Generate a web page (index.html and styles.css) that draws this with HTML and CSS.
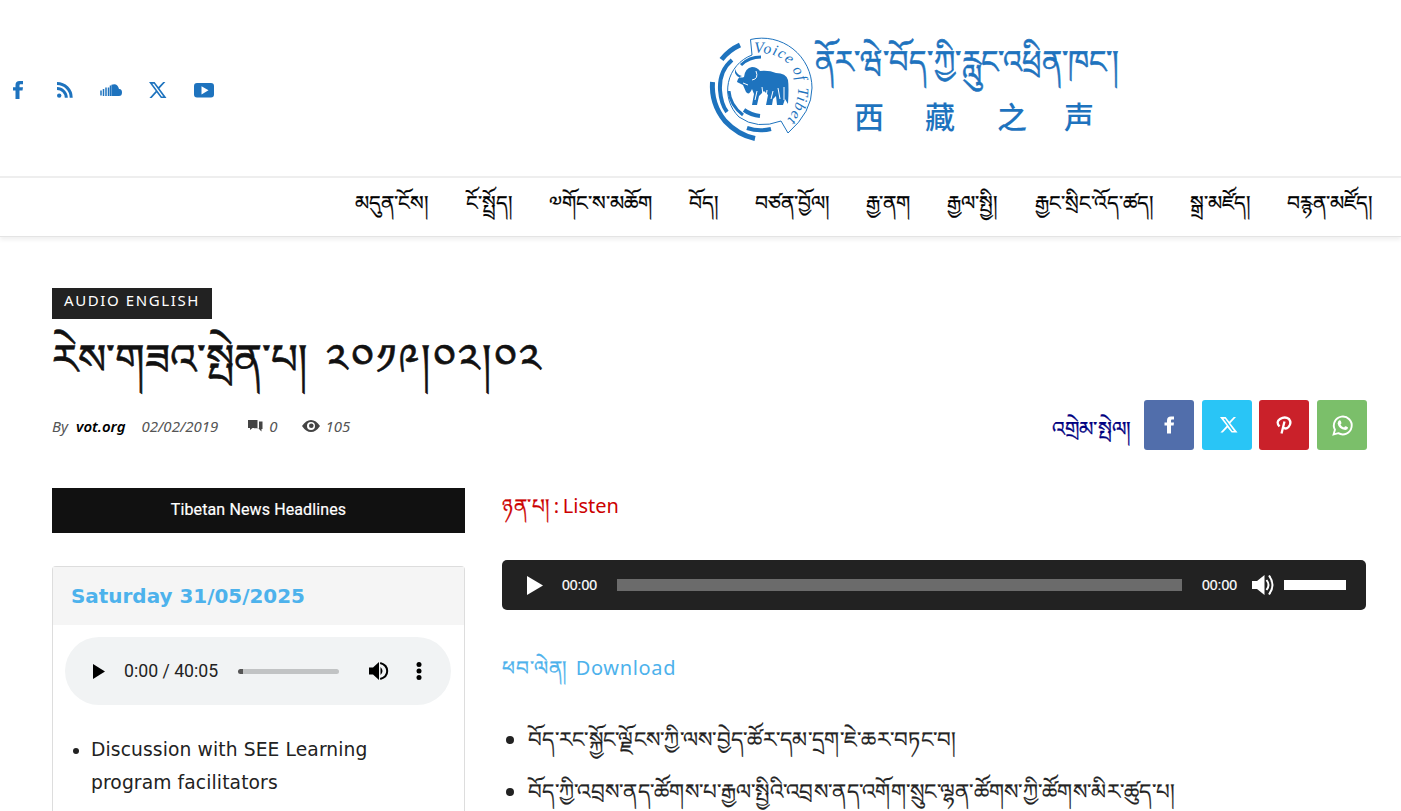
FILE: index.html
```html
<!DOCTYPE html>
<html lang="bo">
<head>
<meta charset="utf-8">
<title>རེས་གཟའ་སྤེན་པ། ༢༠༡༩།༠༢།༠༢</title>
<link rel="stylesheet" href="styles.css">
</head>
<body>
<header class="top">
  <div class="social">
    <svg viewBox="0 0 20 20"><path d="M7.500 19v-8.500H5V7.300h2.500V5C7.500 2.300 9 1 11.500 1H15v3.200h-2.200c-1 0-1.300.5-1.300 1.400v1.700H15l-.5 3.200h-3V19z"/></svg>
    <svg viewBox="0 0 20 20"><circle cx="4.200" cy="15.600" r="2.200"/><path d="M2 8.500a9.300 9.300 0 0 1 9.300 9.300M2 3.500a14.200 14.200 0 0 1 14.200 14.200" fill="none" stroke="#1e73be" stroke-width="3"/></svg>
    <svg class="wide" viewBox="0 0 24 20"><path d="M2 10.500v5M4.500 9v7M7 7.500v8.500M9.500 7.500V16M11.500 5.500V16" fill="none" stroke="#1e73be" stroke-width="1.500"/><path d="M12.400 4.800Q18.500 2.500 20 9q3-.3 3 3.500t-3.500 3.500h-7.100z"/></svg>
    <svg viewBox="0 0 20 20"><path fill-rule="evenodd" d="M1 2h5.600l3.800 5L15.200 2h2.200l-5.900 6.600L18.500 18h-5.600L8.700 12.500 3.700 18H1.400l6.300-7.100zM4.300 3.700 13.700 16.400h1.600L6 3.700z"/></svg>
    <svg viewBox="0 0 20 20"><path fill-rule="evenodd" d="M3 3h14q3 0 3 3v8.500q0 3-3 3H3q-3 0-3-3V6q0-3 3-3zm4.500 3.200v8.200l7-4.100z"/></svg>
  </div>
  <svg class="logo" viewBox="700 25 430 125">
    <g fill="none" stroke="#1e73be">
      <path stroke-width="1" d="M752 55L750.500 39.500A50 50 0 0 1 812 88Q812 112 788 133L781 121Q757 130 739 117A37.500 37.500 0 0 1 752 55"/>
      <path stroke-width="5" d="M721.500 59.500Q729 50 740 45"/>
      <path stroke-width="5" d="M712.500 82Q711 104 725 121 738 135 755 138.500"/>
      <path stroke-width="4" d="M732 60Q719 71 720 90q1 14 7 22M747 128q12 4 24 1M744 110q7 5 16 6"/>
      <path stroke-width="3" d="M729 91q1 14 14 24M741 65q8-8 20-8"/>
    </g>
    <path d="M735 73q3 6 9 4 1-9 8-10 5 0 8 4 9-1 16 2 10 0 12 7 1 7 0 24l-3-5-2 6h-6l-1-9-3 3-1 6h-6l2-10-4-4-5 5-2 9h-5l2-11-2-5q-3 7-6 3l-3-7-6-3q1-5 5-6-5-1-7-7z" fill="#1e73be"/>
    <path d="M756 71q3 8-4 9M743 83l5 2M757 91l-2 9M762 87l1 8M767 90l-1 8M773 91l-2 8M778 88l2 11M784 87v13" fill="none" stroke="#fff"/>
    <path id="arc" d="M754 53Q788 51 797 80 802 103 783 125" fill="none"/>
    <text class="voice"><textPath href="#arc" textLength="98">Voice of Tibet</textPath></text>
    <text class="logo-bo" x="815" y="73" textLength="304" lengthAdjust="spacingAndGlyphs">ནོར་ཝེ་བོད་ཀྱི་རླུང་འཕྲིན་ཁང་།</text>
    <text class="logo-zh" x="854 925 997 1064" y="128">西藏之声</text>
  </svg>
</header>
<nav class="menu">
  <a>མདུན་ངོས།</a><a>ངོ་སྤྲོད།</a><a>༧གོང་ས་མཆོག</a><a>བོད།</a><a>བཙན་བྱོལ།</a><a>རྒྱ་ནག</a><a>རྒྱལ་སྤྱི།</a><a>རྒྱང་སྲིང་འོད་ཚད།</a><a>སྒྲ་མཛོད།</a><a>བརྙན་མཛོད།</a>
</nav>
<main>
  <span class="tag">AUDIO ENGLISH</span>
  <h1>རེས་གཟའ་སྤེན་པ། <span class="day">༢༠༡༩།༠༢།༠༢</span></h1>
  <div class="info">
    <div class="meta">
      <span>By</span><b>vot.org</b><span class="date">02/02/2019</span>
      <svg class="bubble" viewBox="0 0 16 14"><path d="M1 1h9.500v8H5.500L3 11V9H1zM12 2.500h3.500V10h-1v2.500L12 10H7V9.800h5z"/></svg><span class="n">0</span>
      <svg class="eye" viewBox="0 0 18 12"><path fill-rule="evenodd" d="M0 6q4-6 9-6t9 6q-4 6-9 6T0 6zm9-4a4 4 0 1 0 0 8 4 4 0 0 0 0-8z"/><circle cx="9.300" cy="5.700" r="2.300"/></svg><span class="n">105</span>
    </div>
    <div class="share">
      <span class="share-label">འགྲེམ་སྤེལ།</span>
      <i class="fb"><svg viewBox="0 0 20 20"><path d="M8 18.500v-8H5.500V7.500H8V5.500C8 2.700 9.300 1.500 12 1.500h3v3h-1.700c-.9 0-1.300.5-1.300 1.300v1.700h3l-.4 3H12v8z"/></svg></i>
      <i class="tw"><svg viewBox="0 0 20 20"><path fill-rule="evenodd" d="M1 1.500h6l3.800 5L15.500 1.500h2.400l-6 6.700L19.500 18h-6.200l-4.300-5.500L4 18H1.500l6.600-7.300zM4.700 3.300 14 16.300h1.800L6.400 3.300z"/></svg></i>
      <i class="pin"><svg viewBox="0 0 20 20"><path d="M5.500 11.500Q1.500 7 6 4q5-3 9 0 3 4-.5 8-3 3-5.500 0M10.500 6.500 7.500 18.500" fill="none" stroke="#fff" stroke-width="2.300"/></svg></i>
      <i class="wa"><svg viewBox="0 0 20 20"><path d="m1.500 18.500 1.300-4.500A8.500 8.500 0 1 1 6 17.300z" fill="none" stroke="#fff" stroke-width="1.800"/><path d="M6 6q1.500-2 2.500 0l.5 1.500q-.2 1-1 1.500 1.200 2.200 3.500 3 1-1.700 1.800-1.200l2 1q0 2.200-2.600 2.600Q6.500 13.500 5.300 8.200z"/></svg></i>
    </div>
  </div>
  <div class="columns">
    <aside>
      <div class="headline">Tibetan News Headlines</div>
      <section class="card">
        <h2>Saturday 31/05/2025</h2>
        <div class="player">
          <svg class="pl" viewBox="0 0 12 15"><path d="M0 0v15l12-7.500z"/></svg>
          <span>0:00 / 40:05</span><div class="track"></div>
          <svg class="vol" viewBox="0 0 20 20"><path d="M0 6.500h4L10 1v18l-6-5.500H0zM11.500 6q4 4 0 8z"/><path d="M12 2q7 2 7 8t-7 8" transform="translate(-.8)" fill="none" stroke="#000" stroke-width="2"/></svg>
          <svg class="dots" viewBox="0 0 6 18"><circle cx="3" cy="2.500" r="2.500"/><circle cx="3" cy="9" r="2.500"/><circle cx="3" cy="15.500" r="2.500"/></svg>
        </div>
        <ul><li><span>Discussion with SEE Learning</span><br><span>program facilitators</span></li></ul>
      </section>
    </aside>
    <article>
      <p class="listen"><span class="bo">ཉན་པ།</span> : Listen</p>
      <div class="audio">
        <svg class="pl" viewBox="0 0 16 19"><path d="M0 0v19l16-9.500z"/></svg>
        <span>00:00</span><div class="rail"></div><span>00:00</span>
        <svg class="vol" viewBox="0 0 22 22"><path d="M0 7h5l7.500-6v20L5 15H0z"/><path d="M14.500 6q4 5 0 10M17 1.500q7 9.500 0 19" fill="none" stroke="#fff" stroke-width="2"/></svg>
        <div class="level"></div>
      </div>
      <p class="download"><span class="bo">ཕབ་ལེན།</span> <span>Download</span></p>
      <ul class="news">
        <li>བོད་རང་སྐྱོང་ལྗོངས་ཀྱི་ལས་བྱེད་ཚོར་དམ་དྲག་ཇེ་ཆར་བཏང་བ།</li>
        <li>བོད་ཀྱི་འབྲས་ནད་ཚོགས་པ་རྒྱལ་སྤྱིའི་འབྲས་ནད་འགོག་སྲུང་ལྷན་ཚོགས་ཀྱི་ཚོགས་མིར་ཚུད་པ།</li>
      </ul>
    </article>
  </div>
</main>
</body>
</html>
```
FILE: styles.css
```css
* { box-sizing: border-box; }
body { margin: 0; height: 811px; overflow: hidden; background: #fff; color: #222; font-family: "Noto Sans", sans-serif; }
svg { display: block; flex: none; overflow: visible; }
.top { height: 178px; border-bottom: 2px solid #eee; display: flex; padding: 25px 271px 0 8px; justify-content: space-between; }
.social { display: flex; gap: 26.500px; padding-top: 55px; height: 75px; fill: #1e73be; }
.social svg { width: 20px; height: 20px; }
.social .wide { width: 24px; margin: 0 -2px; }
.logo { width: 430px; height: 125px; fill: #1e73be; }
.voice { font: italic 15.500px "Liberation Serif", serif; }
.logo-bo { font-size: 32px; stroke: #1e73be; stroke-width: .6px; }
.logo-zh { font: 500 30px "Noto Sans CJK SC", sans-serif; }
.menu { height: 59px; border-bottom: 1px solid #e4e4e4; box-shadow: 0 3px 4px rgba(0,0,0,.06); display: flex; justify-content: flex-end; gap: 37.200px; padding: 8px 29px 0 0; color: #000; font-size: 20.230px; line-height: 32px; white-space: nowrap; -webkit-text-stroke: .25px #000; }
main { padding: 51px 34px 0 52px; }
.tag { display: block; width: 160px; height: 31px; background: #222; color: #fff; font-size: 15px; line-height: 25px; letter-spacing: 1.600px; padding-left: 12px; white-space: nowrap; }
h1 { margin: 7px 0 0; height: 74px; line-height: 63px; font-size: 42px; font-weight: 400; letter-spacing: .1px; color: #111; white-space: nowrap; -webkit-text-stroke: .6px #111; }
.day { letter-spacing: 2.300px; margin-left: 8px; }
.info { display: flex; justify-content: space-between; height: 50px; }
.meta { display: flex; align-items: center; height: 52px; font-size: 15px; font-style: italic; color: #555; fill: #444; white-space: nowrap; }
.meta b { color: #000; font-weight: 600; margin: 0 16px 0 8px; }
.date { margin-right: 29px; }
.bubble { width: 16px; height: 14px; }
.eye { width: 18px; height: 12px; margin-left: 24px; }
.n { margin-left: 6px; }
.share { display: flex; gap: 7.600px; }
.share-label { color: #000080; font-size: 20.500px; line-height: 56px; letter-spacing: .3px; margin-right: 5px; white-space: nowrap; -webkit-text-stroke: .3px #000080; }
.share i { width: 50px; height: 50px; border-radius: 3px; display: flex; align-items: center; justify-content: center; fill: #fff; }
.share svg { width: 20px; height: 20px; }
.share .tw svg { margin-left: 3px; width: 19px; }
.fb { background: #516eab; }
.tw { background: #29c5f6; }
.pin { background: #ca212a; }
.wa { background: #7bbf6a; }
.share .wa svg { width: 21px; height: 21px; }
.columns { display: grid; grid-template-columns: 413px 864px; gap: 37px; margin-top: 38px; }
.headline { background: #111; color: #fff; height: 45px; line-height: 43px; text-align: center; font-family: Roboto, sans-serif; font-size: 16px; letter-spacing: .12px; -webkit-text-stroke: .2px #fff; }
.card { margin-top: 33px; border: 1px solid #ddd; border-bottom: 0; border-radius: 4px 4px 0 0; height: 245px; font-family: "DejaVu Sans", sans-serif; }
.card h2 { margin: 0; height: 58px; background: #f5f5f5; padding-left: 18px; color: #4db2ec; font-size: 19.950px; line-height: 58px; font-weight: 700; }
.player { margin: 12px 13px 0 12px; height: 68px; border-radius: 34px; background: #f1f3f4; display: flex; align-items: center; padding-left: 28px; font-family: Roboto, sans-serif; font-size: 17.700px; color: #222; white-space: nowrap; }
.player .pl { width: 12px; height: 15px; margin-right: 19px; }
.player span { width: 94px; }
.track { width: 101px; height: 5px; border-radius: 3px; margin: 0 30px 0 20px; background: linear-gradient(90deg,#555 5px,#c1c3c4 5px); }
.player .vol { width: 20px; height: 20px; }
.dots { width: 6px; height: 18px; margin-left: 27px; }
.card ul { margin: 28px 0 0; padding-left: 38px; font-size: 18.700px; line-height: 33px; letter-spacing: .11px; white-space: nowrap; }
.listen, .download { margin: 0; font-size: 20px; line-height: 36px; white-space: nowrap; }
.bo { -webkit-text-stroke: .3px currentColor; letter-spacing: .6px; }
.listen { color: #c00; height: 72px; word-spacing: -1.500px; }
.audio { height: 50px; background: #222; border-radius: 5px; display: flex; align-items: center; padding: 0 20px 0 25px; color: #fff; fill: #fff; font-family: "Liberation Sans", sans-serif; font-size: 14px; -webkit-text-stroke: .2px #fff; }
.audio .pl { width: 16px; height: 19px; margin-right: 19px; }
.audio span { width: 35px; }
.rail { width: 565px; height: 12px; background: #6b6b6b; margin: 0 20px; }
.audio .vol { width: 22px; height: 22px; margin: 0 10px 0 15px; }
.level { width: 62px; height: 10px; background: #fff; }
.download { color: #4db2ec; margin-top: 40px; height: 63px; letter-spacing: .65px; word-spacing: 2.500px; }
.download .bo { letter-spacing: .9px; }
.news { margin: 0; padding-left: 26px; height: 88px; font-size: 21.350px; line-height: 52px; letter-spacing: .26px; white-space: nowrap; -webkit-text-stroke: .2px #222; }
```
